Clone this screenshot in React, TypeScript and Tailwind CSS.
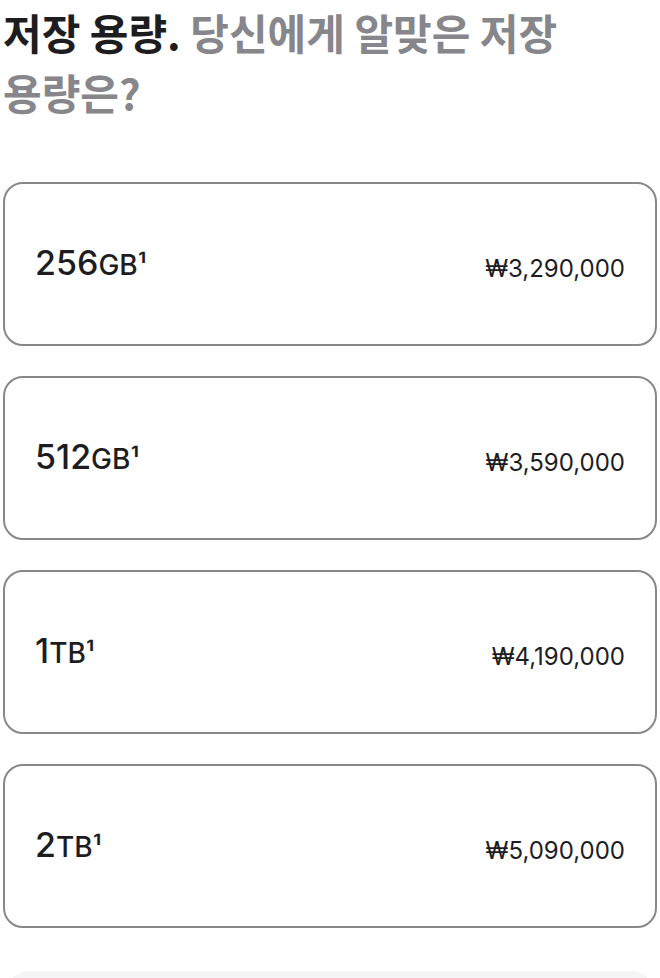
const options = [
  { size: "256", unit: "GB", price: "₩3,290,000" },
  { size: "512", unit: "GB", price: "₩3,590,000" },
  { size: "1", unit: "TB", price: "₩4,190,000" },
  { size: "2", unit: "TB", price: "₩5,090,000" },
];

const StorageCard = ({ size, unit, price }: { size: string; unit: string; price: string }) => {
  return (
    <button className="flex h-[164px] w-full items-center justify-between rounded-[20px] border-2 border-[#888888] bg-white px-[30px] text-left text-[#1d1d1f]">
      <span className="flex items-baseline pb-[2px] font-['Inter',sans-serif] font-medium">
        <span className="text-[34px] leading-none">{size}</span>
        <span className="text-[28px] leading-none">{unit}¹</span>
      </span>
      <span className="pt-[9px] font-['Inter',sans-serif] text-[24px] leading-none">{price}</span>
    </button>
  );
};

export default function App() {
  return (
    <div className="h-[978px] w-full overflow-hidden bg-white">
      <h2 className="break-keep pl-[3px] pt-[2px] font-['Noto_Sans_CJK_KR',sans-serif] text-[42px] font-bold leading-[60px] text-[#86868b]">
        <span className="text-[#1d1d1f]">저장 용량.</span> 당신에게 알맞은 저장 용량은?
      </h2>
      <div className="mt-[60px] flex flex-col gap-[30px] px-[3px]">
        {options.map((o) => (
          <StorageCard key={o.size + o.unit} {...o} />
        ))}
      </div>
      <div className="mx-[8px] mt-[43px] h-[40px] rounded-t-[20px] bg-[#f5f5f7]" />
    </div>
  );
}
